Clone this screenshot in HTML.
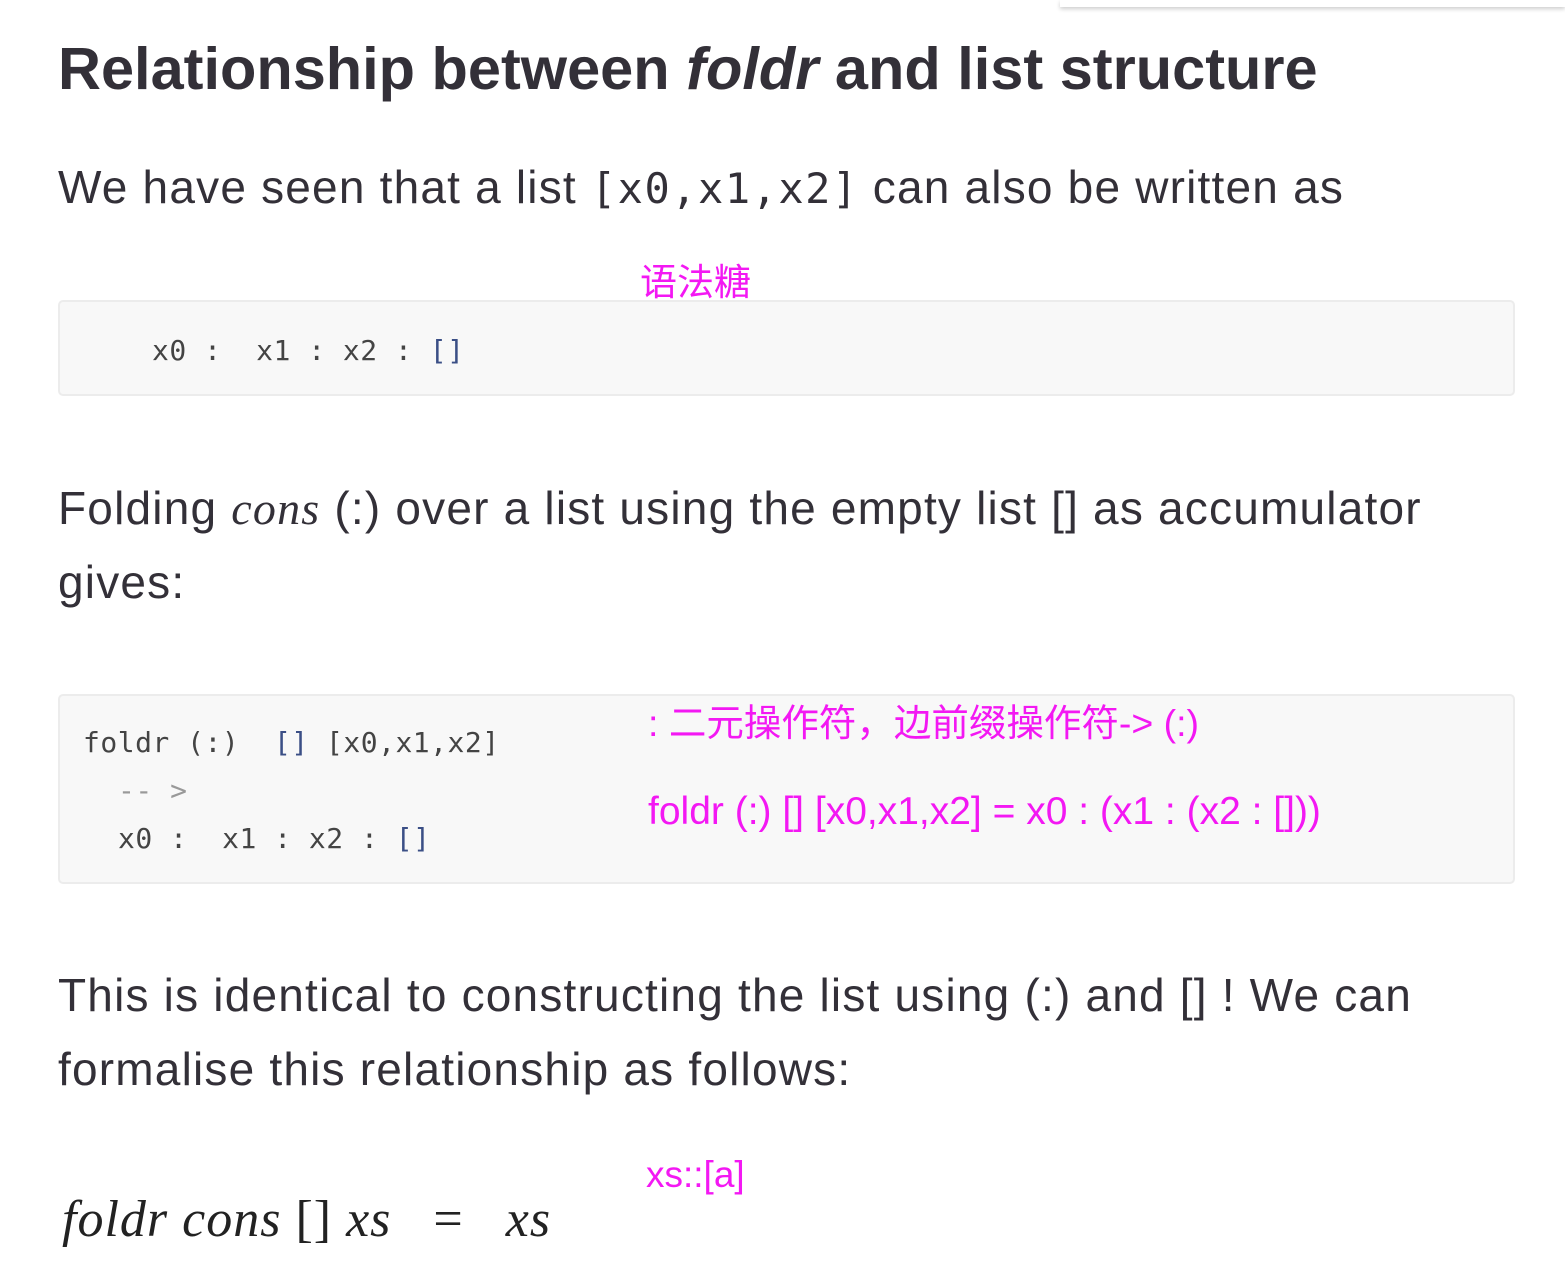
<!DOCTYPE html>
<html><head><meta charset="utf-8"><style>
body{margin:0;width:1565px;height:1286px;background:#fff;position:relative;overflow:hidden;color:#333038;font-family:"Liberation Sans","Noto Sans CJK SC",sans-serif}
.a{position:absolute;white-space:pre}
.h{font-weight:bold;font-size:59.5px;left:58px;top:34px;color:#333038}
.p{font-size:46px;letter-spacing:1.2px;left:58px;color:#333038}
.mono{font-family:"DejaVu Sans Mono","Liberation Mono",monospace;letter-spacing:1.5px}
.code{font-family:"DejaVu Sans Mono","Liberation Mono",monospace;font-size:28px;letter-spacing:0.5px;color:#444}
.box{position:absolute;left:58px;width:1457px;background:#f8f8f8;border:2px solid #ececec;border-radius:5px;box-sizing:border-box}
.pk{color:#f318f3;font-family:"Liberation Sans","Noto Sans CJK SC",sans-serif}
.b{color:#3b4f86}
.m{font-family:"Liberation Serif",serif;font-style:italic;font-size:52px;letter-spacing:1px;color:#222}
</style></head><body>
<div class="a" style="left:1060px;top:0;width:505px;height:7px;box-shadow:0 2px 4px rgba(0,0,0,.2);background:#fff"></div>
<div class="a h">Relationship between <i>foldr</i> and list structure</div>
<div class="a p" style="top:160px">We have seen that a list <span class="mono" style="font-size:42px">[x0,x1,x2]</span> can also be written as</div>
<div class="a pk" style="left:640px;top:252px;font-size:37px">语法糖</div>
<div class="box" style="top:300px;height:96px"></div>
<div class="a code" style="left:152px;top:334px">x0 :  x1 : x2 : <span class="b">[]</span></div>
<div class="a p" style="top:481px">Folding <i style="font-family:'Liberation Serif',serif">cons</i> (:) over a list using the empty list [] as accumulator</div>
<div class="a p" style="top:555px">gives:</div>
<div class="box" style="top:694px;height:190px"></div>
<div class="a code" style="left:83px;top:726px">foldr (:)  <span class="b">[]</span> [x0,x1,x2]</div>
<div class="a code" style="left:118px;top:774px;color:#999">-- &gt;</div>
<div class="a code" style="left:118px;top:822px">x0 :  x1 : x2 : <span class="b">[]</span></div>
<div class="a pk" style="left:648px;top:692px;font-size:37.5px">: 二元操作符，边前缀操作符-&gt; (:)</div>
<div class="a pk" style="left:648px;top:790px;font-size:39px">foldr (:) [] [x0,x1,x2] = x0 : (x1 : (x2 : []))</div>
<div class="a p" style="top:968px">This is identical to constructing the list using (:) and [] ! We can</div>
<div class="a p" style="top:1042px">formalise this relationship as follows:</div>
<div class="a pk" style="left:646px;top:1154px;font-size:37px">xs::[a]</div>
<div class="a m" style="left:62px;top:1190px">foldr cons <span style="font-style:normal">[]</span> xs   <span style="font-style:normal">=</span>   xs</div>
</body></html>
